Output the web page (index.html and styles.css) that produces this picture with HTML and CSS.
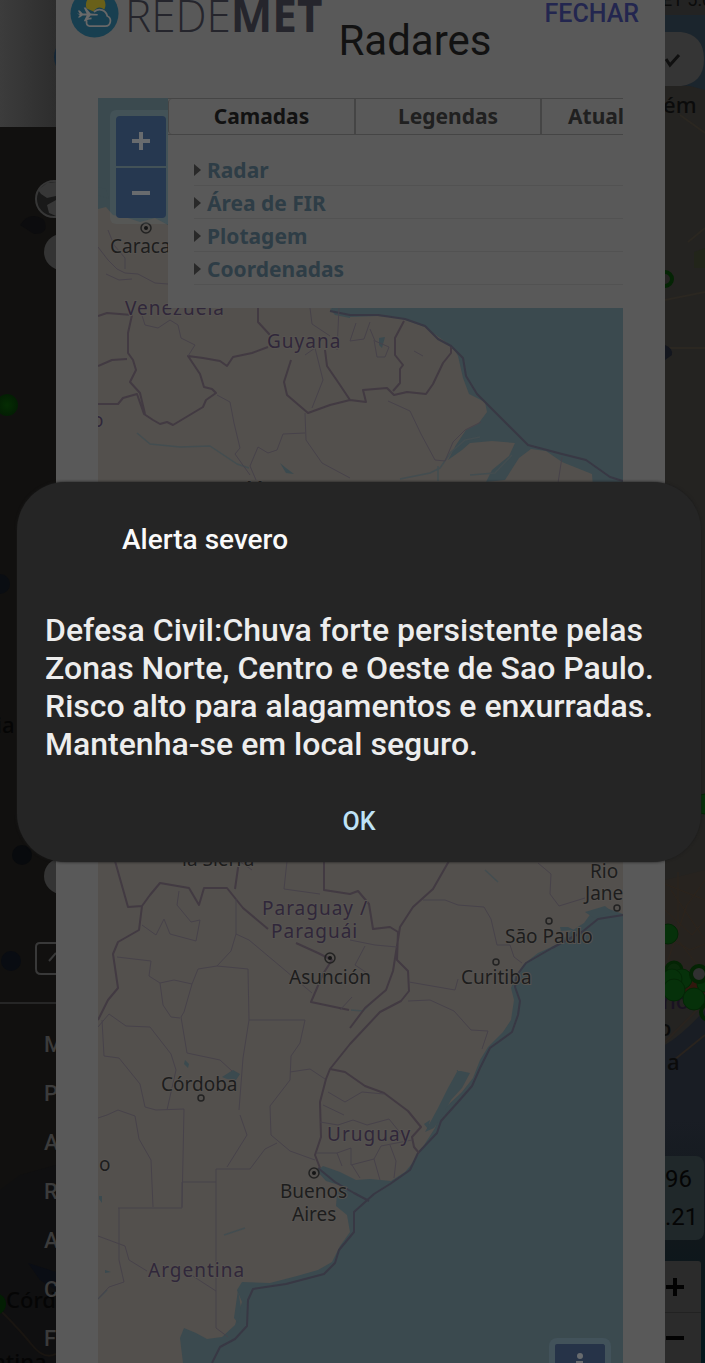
FILE: index.html
```html
<!DOCTYPE html>
<html lang="pt-BR">
<head>
<meta charset="utf-8">
<meta name="viewport" content="width=device-width, initial-scale=1">
<title>Radares</title>
<link rel="stylesheet" href="styles.css">
</head>
<body>
<div class="app">
  <aside class="drawer">
    <svg class="backdrop" viewBox="0 0 56 1363" preserveAspectRatio="xMinYMin slice" aria-hidden="true">
      <defs>
        <linearGradient id="cover"><stop offset="0" stop-color="#3c3c3c"/><stop offset="1" stop-color="#2d2d2d"/></linearGradient>
        <radialGradient id="dot"><stop offset="0" stop-color="#052d03"/><stop offset="1" stop-color="#031e03"/></radialGradient>
      </defs>
      <rect width="56" height="1363" fill="#11100f"/>
      <path d="M0 1190L20 1175L56 1165V1363H0Z" fill="#0f0f10"/>
      <path d="M28 1263L56 1272V1290L40 1280Z" fill="#0a0d14"/>
      <rect width="56" height="127" fill="url(#cover)"/>
      <circle cx="74" cy="57" r="20" fill="#142636"/>
      <path d="M20 225Q30 210 44 220Q50 234 34 234Z" fill="#0c0c0e"/>
      <circle cx="54" cy="199" r="18" fill="#191919" stroke="#373737" stroke-width="2"/>
      <path d="M38 190L47 183L56 182V196L47 198L41 194ZM47 205L56 200V216L49 213Z" fill="#373737"/>
      <circle cx="62" cy="252" r="18" fill="#343434"/>
      <circle cx="7" cy="405" r="11" fill="url(#dot)"/>
      <circle cx="0" cy="584" r="10" fill="#0a0d12"/>
      <circle cx="22" cy="855" r="10" fill="#080a0d"/>
      <circle cx="62" cy="876" r="18" fill="#343434"/>
      <circle cx="11" cy="961" r="10" fill="#090c12"/>
      <path d="M56 943H40Q36 943 36 947V969Q36 974 41 974H56M49 961L56 953" fill="none" stroke="#393939" stroke-width="2"/>
      <path d="M0 1310Q20 1330 32 1345T56 1354" fill="none" stroke="#191511" stroke-width="2"/>
      <circle cx="-5" cy="1304" r="11" fill="#031e03"/>
      <g class="place" fill="#050505">
        <text x="-4" y="733">ia</text>
        <text x="6" y="1308">Córdoba</text>
        <text x="-8" y="1370">ntina</text>
      </g>
    </svg>
    <nav class="menu" aria-label="Menu">
      <a href="#m">M</a><a href="#p">P</a><a href="#a">A</a><a href="#r">R</a><a href="#a2">A</a><a href="#c">C</a><a href="#f">F</a>
    </nav>
  </aside>

  <main class="sheet">
    <header class="sheet-head">
      <div class="brand">
        <svg class="brand-mark" viewBox="0 0 50 50" aria-hidden="true">
          <circle cx="25" cy="25" r="24.5" fill="#183f50"/>
          <path d="M17 20A10 10 0 1 1 35 21Q29 16 24 23Z" fill="#696019"/>
          <path d="M17 33Q16 37 20 38H36A5.500 5.500 0 0 0 38 27.500A8 8 0 0 0 25 23" fill="none" stroke="#686868" stroke-width="1.800" stroke-linecap="round"/>
          <path d="M16 33Q17 30 22 30" fill="none" stroke="#686868" stroke-width="1.800"/>
          <path d="M7 25L10 25.500L8 22L10 22L13 25H17L14 19H16L21 25L28 25.500Q29 26.500 28 27H21L16 33H14L17 27H13L10 29H8L10 26.500Z" fill="#6a6a6a"/>
        </svg>
        <span class="brand-name">REDE<b>MET</b></span>
      </div>
      <h1 class="title">Radares</h1>
      <button class="close" type="button">FECHAR</button>
    </header>

    <section class="map">
      <svg class="backdrop" viewBox="98 98 525 1265" preserveAspectRatio="xMinYMin slice" role="img" aria-label="Mapa da América do Sul">
        <rect x="98" y="98" width="525" height="1265" fill="#3b4a4f"/>
        <path class="land" d="M98 209L106 207L113 215L125 217L140 222L155 218L168 225L250 270L330 308L350 317L378 316L400 318L425 327L440 338L453 347L458 356L463 378L469 394L485 402L487 412L478 424L466 430L456 445L448 460L462 450L470 443L492 441L515 443L509 456L492 470L486 482L505 480L519 458L531 449L546 451L562 462L592 474L593 487L640 510V909L623 914L606 908L592 912L584 923L570 932L558 944L538 953L524 964L516 975L511 988L514 1000L511 1020L503 1032L488 1047L480 1060L473 1078L462 1092L448 1105L440 1114L435 1128L426 1142L415 1160L405 1172L391 1181L370 1179L356 1180L340 1172L323 1166L317 1171L326 1181L342 1186L337 1193L336 1206L347 1215L350 1232L340 1246L332 1262L318 1270L297 1276L270 1283L242 1282L237 1290L242 1302L235 1325L222 1337L207 1339L196 1333L184 1328L180 1338L183 1363H98Z"/>
        <g class="lake">
          <path d="M438 1108L448 1088L458 1070L456 1070L470 1073L462 1088L451 1100L441 1117L434 1128L425 1132Z"/>
          <path d="M185 1060L189 1064L188 1068L184 1064ZM222 1077L233 1070L240 1074L236 1080L227 1079ZM280 463L286 468L294 474L286 473ZM330 309L350 309V318L335 315ZM379 338L385 337L382 348L379 345ZM238 1290L241 1308L238 1323L234 1318ZM424 1124L430 1120L428 1129ZM560 927L568 927L574 930L561 931ZM585 912L605 906L612 912L594 918Z"/>
          <path d="M98 187L106 189L109 199L98 195ZM99 1196H102V1203L99 1199ZM105 1270L111 1272L105 1273Z"/>
        </g>
        <g class="river">
          <path d="M137 433L150 444L180 447L210 446L237 464L249 468M400 479L430 473L440 468L451 452L465 440L480 437M438 481L438 466M470 475L495 473L512 455M351 1010L363 1011L372 1002M98 1299L107 1290M224 1235L245 1228M485 870L498 882M488 861L465 850"/>
        </g>
        <g class="coastline">
          <path d="M330 311L350 315L378 315L405 319L425 326L438 339L451 346L463 358L466 376L477 394L528 445L562 454L586 460L610 477L623 481"/>
          <path d="M623 915L598 919L582 932L552 948L526 963L517 975L515 987L520 1001L518 1015L512 1032L490 1048L480 1068L472 1086L458 1102L441 1121L437 1133L418 1153L410 1170L390 1184L374 1194L354 1212L354 1232L339 1250L335 1263L324 1274L286 1284L253 1289L248 1300L247 1326L235 1339L220 1347L212 1363M318 1168L335 1182L354 1193L369 1201"/>
        </g>
        <g class="border">
          <path d="M98 316L107 313L132 315L128 333V353L133 360L136 370L130 382L140 393L145 414M98 366L112 360L127 359M98 404H118L123 398L137 394L144 414L153 420L160 424L167 422L173 425L183 419L203 407L206 400L216 393L212 389L204 387L200 374L188 356L203 358L220 361L227 366L233 357L252 353L268 347M258 308L258 322L270 335M291 360L284 382L287 395L308 413L330 405L350 400L366 402L363 390L387 388L394 395L407 392L426 394L433 384L443 363L451 353V347M325 350L327 366L340 385L350 400M393 391L400 383V369L403 365L395 355V338L404 321"/>
          <path d="M115 861L128 907L142 906L150 895L160 883L189 888L199 905L204 888H227L243 908L268 929M235 889L239 861M142 906L139 930L118 942L113 954L118 988L108 1000L98 1020M296 943L318 953L332 960L323 974L311 1002L349 1010"/>
          <path d="M449 861L433 889L413 907L400 927L393 971L386 990L365 1008L350 1028M324 855L324 890L350 894L358 891L369 904L373 929L390 927L398 932L397 960L408 971L409 991L401 1001L380 1012L350 1044L330 1069L326 1079L320 1102L321 1137L315 1155L320 1168M330 1069L345 1072L365 1086L384 1093L408 1111L421 1127L412 1137L414 1147L419 1153"/>
        </g>
        <g class="region">
          <path d="M98 247L108 260L117 269L125 273L138 274L155 283L168 284M106 274L119 280L132 279M125 269V258L114 245L108 230M140 309L145 325L158 328L170 320L178 325L181 338L195 345L188 356M217 395L230 402L234 423L240 448L235 454L250 475M305 413L306 440L322 463L350 478M305 433L283 434L277 450L268 453L258 447L250 466L256 480M305 355L315 348L323 380L312 408M310 308L312 324L330 336M339 308L337 350M356 323L350 341L364 339L370 322M388 401L410 411L421 434L435 460L445 461L453 442L465 430L481 422M370 329L375 341L389 347L385 357L377 357L374 340M562 457L558 483M414 351L423 356"/>
          <path d="M179 891L177 905L191 922L200 920L196 941L170 934L164 919L156 935L142 925M236 899V934L249 940L280 966L312 993M236 934L231 951L217 966L248 969L249 1020L243 1058L239 1110M217 966L198 969L192 984L174 980L160 983L149 976L151 961L117 957M192 984L184 1012L181 1017L187 1053L220 1060L232 1071M160 983L163 1005L171 1017L180 1018M98 1027L109 1014L126 1026L150 1027L171 1054L176 1070L167 1110M102 1020L104 1056L119 1058L140 1084L145 1107L156 1110L184 1109L182 1207M98 1118L107 1115L118 1110L135 1116L139 1139L151 1160L153 1207M118 1208H182V1182H216M119 1208V1260L124 1282L109 1287L98 1299M98 1236L125 1246L129 1260L147 1271M216 1169V1328L228 1337M216 1169H250L265 1149L277 1143M227 1167L247 1135L240 1115M249 1020H305L300 1043L291 1056L290 1080L270 1106L271 1135L290 1151L315 1160M290 1072L310 1069L325 1079M185 1271L216 1291"/>
          <path d="M423 900L445 900L458 905L484 907L491 919L497 945H510L514 957L522 963M409 982L455 990L458 979M408 1001L430 1000L454 1011L471 1030L488 1031L482 1049M538 863L551 874L550 894L559 906L585 898M239 861L252 870M287 861L284 889L320 894M350 940L375 945L397 947M365 946L355 965L370 975L368 984M352 997L340 1010"/>
          <path d="M320 1122L338 1125L353 1120L367 1125L389 1119L402 1135M328 1092L345 1102L362 1092L384 1094M323 1105L344 1115M316 1153H337L342 1166M337 1153L351 1148V1165L374 1159L381 1146L412 1140M352 1165L360 1178M374 1159L380 1180M390 1145L396 1161L394 1178"/>
        </g>
        <g class="ring">
          <circle cx="146" cy="228" r="5"/><circle cx="330" cy="958" r="5"/><circle cx="314" cy="1173" r="5"/>
          <circle cx="549" cy="921" r="3"/><circle cx="496" cy="962" r="3"/><circle cx="201" cy="1098" r="3"/><circle cx="617" cy="908" r="3"/>
        </g>
        <g fill="#151515"><circle cx="146" cy="228" r="2"/><circle cx="330" cy="958" r="2"/><circle cx="314" cy="1173" r="2"/></g>
        <g class="city">
          <text x="110" y="253">Caracas</text>
          <text x="182" y="866">la Sierra</text>
          <text x="246" y="495">Manaus</text>
          <text x="289" y="984">Asunción</text>
          <text x="161" y="1091">Córdoba</text>
          <text x="505" y="943">São Paulo</text>
          <text x="461" y="984">Curitiba</text>
          <text x="590" y="878">Rio</text>
          <text x="585" y="900">Janeiro</text>
          <text x="280" y="1198">Buenos</text>
          <text x="292" y="1221">Aires</text>
          <text x="99" y="1171">o</text>
        </g>
        <g class="country">
          <text x="125" y="315">Venezuela</text>
          <text x="267" y="348">Guyana</text>
          <text x="262" y="915">Paraguay /</text>
          <text x="271" y="938">Paraguái</text>
          <text x="327" y="1141">Uruguay</text>
          <text x="148" y="1277">Argentina</text>
          <text x="92" y="427">o</text>
        </g>
      </svg>

      <div class="map-top">
        <div class="zoom">
          <button type="button" aria-label="Aproximar"><svg viewBox="0 0 20 20" aria-hidden="true"><path d="M1 10H19M10 1V19"/></svg></button>
          <button type="button" aria-label="Afastar"><svg viewBox="0 0 20 20" aria-hidden="true"><path d="M1 10H19"/></svg></button>
        </div>
        <div class="panel">
          <div class="tabs" role="tablist">
            <button class="tab tab-on" type="button" role="tab" aria-selected="true">Camadas</button>
            <button class="tab" type="button" role="tab" aria-selected="false">Legendas</button>
            <button class="tab tab-cut" type="button" role="tab" aria-selected="false">Atualizações</button>
          </div>
          <ul class="layers">
            <li><a href="#radar">Radar</a></li>
            <li><a href="#fir">Área de FIR</a></li>
            <li><a href="#plotagem">Plotagem</a></li>
            <li><a href="#coordenadas">Coordenadas</a></li>
          </ul>
        </div>
      </div>
      <button class="info" type="button" aria-label="Informações"><svg viewBox="0 0 20 32" aria-hidden="true"><circle cx="10" cy="6" r="3"/><path d="M6 11H13V26H16V29H5V26H8V14H6Z"/></svg></button>
    </section>
  </main>

  <aside class="rail">
    <svg class="backdrop" viewBox="665 0 40 1363" preserveAspectRatio="xMinYMin slice" aria-hidden="true">
      <defs>
        <linearGradient id="sea" x2="0" y2="1"><stop offset="0" stop-color="#191d24"/><stop offset=".5" stop-color="#10171b"/><stop offset="1" stop-color="#03171c"/></linearGradient>
      </defs>
      <rect x="665" width="40" height="1363" fill="#242321"/>
      <rect x="665" width="40" height="15" fill="#232323"/>
      <path d="M665 15H705V90L690 86L665 84Z" fill="#1b252d"/>
      <path d="M665 32H681Q704 35 704 59T681 86H665Z" fill="#353535"/>
      <path d="M666 59L670 65L679 55" fill="none" stroke="#101010" stroke-width="3"/>
      <path d="M680 115L705 133M688 242L705 228M665 300L705 292M665 348H705" fill="none" stroke="#2b2721" stroke-width="2"/>
      <path d="M694 252L705 248V268H694Z" fill="#22251a"/>
      <circle cx="665" cy="279" r="7" fill="#242321" stroke="#042404" stroke-width="4"/>
      <path d="M665 345Q673 348 672 355L665 360Z" fill="#13161e"/>
      <path d="M665 880L705 870V1000H665Z" fill="#27231f"/>
      <path d="M665 884L705 900M668 960L687 905L705 880M678 872V940L705 975M665 910L692 935L705 920M671 890L705 940M665 936L690 950L705 944M668 1000L705 967" fill="none" stroke="#2d241c" stroke-width="1"/>
      <path d="M665 1045Q682 1035 705 1010V1180H665Z" fill="#191d24"/>
      <rect x="665" y="1120" width="40" height="243" fill="url(#sea)"/>
      <path d="M665 1042L705 1002M674 1060L705 1035" fill="none" stroke="#29231e" stroke-width="2"/>
      <text class="place" x="662" y="1009" fill="#191222">no</text>
      <circle cx="695" cy="990" r="10" fill="#32170d"/>
      <circle cx="674" cy="970" r="8" fill="#0a2a0a" stroke="#042404" stroke-width="3"/>
      <g fill="#06310a" stroke="#042606" stroke-width="1"><circle cx="668" cy="934" r="10"/><circle cx="682" cy="979" r="10"/><circle cx="672" cy="979" r="10"/><circle cx="674" cy="990" r="11"/><circle cx="705" cy="984" r="8"/><circle cx="694" cy="999" r="11"/><circle cx="705" cy="804" r="10"/></g>
      <circle cx="699" cy="974" r="8" fill="#303030" stroke="#042404" stroke-width="4"/>
      <circle cx="709" cy="1012" r="8" fill="none" stroke="#042404" stroke-width="4"/>
      <g class="place" fill="#0b0b0b">
        <text x="658" y="1036">o</text><text x="667" y="1070">a</text><text x="663" y="113">ém</text>
      </g>
      <text class="status" x="662" y="6">ET 5.0</text>
    </svg>
    <div class="coords"><span>96</span><span>.21</span></div>
    <div class="rail-zoom">
      <button type="button" aria-label="Aproximar mapa"><svg viewBox="0 0 20 20" aria-hidden="true"><path d="M1 10H19M10 1V19"/></svg></button>
      <button type="button" aria-label="Afastar mapa"><svg viewBox="0 0 20 20" aria-hidden="true"><path d="M1 10H19"/></svg></button>
    </div>
  </aside>

  <div class="overlay">
    <section class="alert" role="alertdialog" aria-modal="true" aria-labelledby="alert-title" aria-describedby="alert-text">
      <h2 class="alert-title" id="alert-title">Alerta severo</h2>
      <p class="alert-text" id="alert-text">Defesa Civil:Chuva forte persistente pelas Zonas Norte, Centro e Oeste de Sao Paulo. Risco alto para alagamentos e enxurradas. Mantenha-se em local seguro.</p>
      <button class="alert-ok" type="button">OK</button>
    </section>
  </div>
</div>
</body>
</html>
```

FILE: styles.css
```css
* { box-sizing: border-box; }

body {
  margin: 0;
  background: #11100f;
  font-family: Roboto, "Liberation Sans", sans-serif;
}

button {
  margin: 0;
  padding: 0;
  border: 0;
  background: none;
  color: inherit;
  font: inherit;
  cursor: pointer;
}

.app {
  position: relative;
  display: grid;
  grid-template-columns: 56px minmax(0, 1fr) 40px;
  height: 100vh;
  overflow: hidden;
}

.backdrop {
  position: absolute;
  inset: 0;
  width: 100%;
  height: 100%;
}

/* side drawer */
.drawer {
  position: relative;
  display: flex;
  flex-direction: column;
  justify-content: flex-end;
  overflow: hidden;
}

.menu {
  position: relative;
  display: flex;
  flex-direction: column;
  padding: 16px 0 0 44px;
  border-top: 2px solid #262626;
}

.menu a {
  color: #3b3b3b;
  font-size: 22px;
  font-weight: 500;
  line-height: 49px;
  text-decoration: none;
}

.place {
  font-family: "Noto Sans", sans-serif;
  font-size: 22px;
  font-weight: 500;
}

/* sheet */
.sheet {
  display: flex;
  flex-direction: column;
  padding: 0 42px;
  background: #595959;
}

.sheet-head {
  display: flex;
  align-items: flex-start;
  height: 98px;
  margin: 0 -28px;
}

.brand {
  display: flex;
  align-items: flex-start;
  margin-top: -11px;
}

.brand-mark {
  width: 49px;
  height: 49px;
}

.brand-name {
  margin-left: 6px;
  color: #25252c;
  font-family: "Open Sans", sans-serif;
  font-size: 44px;
  font-weight: 300;
  line-height: 52px;
}

.brand-name b { font-weight: 700; }

.title {
  margin: 16px 0 0 16px;
  color: #121212;
  font-size: 42px;
  font-weight: 400;
  line-height: 50px;
}

.close {
  margin-left: auto;
  margin-right: 12px;
  color: #23264f;
  font-size: 25px;
  font-weight: 500;
  line-height: 28px;
}

/* map */
.map {
  position: relative;
  display: flex;
  flex: 1;
  flex-direction: column;
  justify-content: space-between;
  overflow: hidden;
}

.land { fill: #53504d; }
.lake { fill: #3b4a4f; }

.river, .coastline, .border, .region {
  fill: none;
  stroke-linejoin: round;
}

.river { stroke: #434d50; stroke-width: 1.5; }
.coastline { stroke: #383844; stroke-width: 2; }
.border { stroke: #423a42; stroke-width: 2; }
.region { stroke: #47424a; stroke-width: 1; }
.ring { fill: none; stroke: #222; stroke-width: 1.5; }

.city, .country {
  font-family: "Noto Sans", sans-serif;
  font-size: 19px;
  paint-order: stroke;
  stroke: #565350;
  stroke-width: 2px;
}

.city { fill: #1d1d1d; }
.country { fill: #30273a; letter-spacing: 1px; }

.map-top {
  position: relative;
  display: flex;
  align-items: flex-start;
}

.zoom {
  display: grid;
  flex: none;
  gap: 2px;
  margin: 12px 0 0 12px;
  padding: 6px 2px 6px 6px;
  border-radius: 6px 0 0 6px;
  background: rgba(100, 115, 120, .2);
}

.zoom button {
  display: grid;
  place-items: center;
  width: 50px;
  height: 50px;
  background: #263850;
}

.zoom button:first-child { border-radius: 4px 4px 0 0; }
.zoom button:last-child { border-radius: 0 0 4px 4px; }

.zoom svg {
  width: 20px;
  height: 20px;
  stroke: #686b6e;
  stroke-width: 4;
}

.panel {
  flex: 1;
  min-width: 0;
  height: 210px;
  background: #595959;
  font-family: "Noto Sans", sans-serif;
  font-size: 21px;
  font-weight: 700;
}

.tabs {
  display: flex;
  overflow: hidden;
  border: solid #454545;
  border-width: 1px 0;
}

.tab {
  flex: none;
  width: 186px;
  height: 35px;
  padding-bottom: 2px;
  border-left: 2px solid #454545;
  color: #202020;
  line-height: 32px;
}

.tab-on {
  border-left: 1px solid #454545;
  border-radius: 4px;
  color: #121212;
}

.tab-cut {
  padding-left: 26px;
  text-align: left;
}

.layers {
  margin: 18px 0 0 26px;
  padding: 0;
  list-style: none;
}

.layers li {
  height: 33px;
  border-bottom: 1px solid #525252;
}

.layers a {
  display: flex;
  align-items: center;
  gap: 6px;
  height: 34px;
  color: #2e3d46;
  text-decoration: none;
}

.layers a::before {
  content: "";
  border: solid transparent;
  border-width: 6px 0 6px 7px;
  border-left-color: #292929;
}

.info {
  position: relative;
  align-self: flex-end;
  width: 62px;
  height: 25px;
  margin-right: 12px;
  overflow: hidden;
  border: 6px solid #42525a;
  border-bottom: 0;
  border-radius: 8px 8px 0 0;
  background: #263348;
}

.info svg {
  display: block;
  width: 20px;
  height: 32px;
  margin: 6px auto 0;
  fill: #686b6e;
}

/* right rail */
.rail {
  position: relative;
  display: flex;
  flex-direction: column;
  justify-content: flex-end;
  overflow: hidden;
}

.status {
  fill: #0b0b0b;
  font-size: 18px;
}

.coords {
  position: relative;
  display: flex;
  flex-direction: column;
  margin: 0 1px 21px 0;
  padding: 4px 0;
  border-radius: 0 8px 8px 0;
  background: #20282a;
  color: #050505;
  font-size: 24px;
  line-height: 38px;
}

.rail-zoom {
  position: relative;
  display: grid;
  margin-right: 4px;
  border-radius: 0 3px 0 0;
  background: #2b2b2b;
}

.rail-zoom button {
  display: flex;
  align-items: center;
  height: 51px;
}

.rail-zoom button + button { border-top: 1px solid #222; }

.rail-zoom svg {
  width: 20px;
  height: 20px;
  stroke: #020202;
  stroke-width: 4;
}

/* alert */
.overlay {
  position: absolute;
  inset: 0;
  display: grid;
  align-items: center;
  padding: 0 4px 19px 17px;
}

.alert {
  display: flex;
  flex-direction: column;
  padding: 40px 28px 20px;
  border-radius: 48px;
  background: #252525;
  box-shadow: 0 0 3px #1b1b1b;
}

.alert-title {
  margin: 0 0 53px 77px;
  color: #fafafa;
  font-size: 28px;
  font-weight: 500;
  line-height: 36px;
}

.alert-text {
  margin: 0;
  color: #ededed;
  font-size: 32px;
  font-weight: 500;
  line-height: 38px;
}

.alert-ok {
  align-self: center;
  margin-top: 39px;
  padding: 0 20px;
  color: #bfe3f7;
  font-size: 25px;
  font-weight: 500;
  line-height: 40px;
}
```
